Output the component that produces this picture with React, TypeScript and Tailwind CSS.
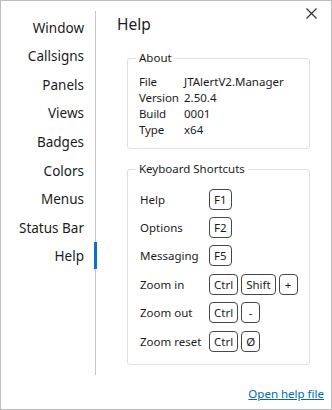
const navItems = ["Window", "Callsigns", "Panels", "Views", "Badges", "Colors", "Menus", "Status Bar", "Help"];

const about = [
  ["File", "JTAlertV2.Manager"],
  ["Version", "2.50.4"],
  ["Build", "0001"],
  ["Type", "x64"],
];

const shortcuts: [string, string[]][] = [
  ["Help", ["F1"]],
  ["Options", ["F2"]],
  ["Messaging", ["F5"]],
  ["Zoom in", ["Ctrl", "Shift", "+"]],
  ["Zoom out", ["Ctrl", "-"]],
  ["Zoom reset", ["Ctrl", "Ø"]],
];

function Key({ label }: { label: string }) {
  return (
    <span className="h-[21px] min-w-[19px] px-[4px] flex items-center justify-center border border-[#474747] rounded-[4px] text-[11.5px] text-[#1a1a1a]">
      {label}
    </span>
  );
}

function Nav() {
  return (
    <nav className="mt-[10px] h-[364px] w-[95px] border-r border-[#c6c6c6] pt-[2.5px]">
      {navItems.map((item) => (
        <div
          key={item}
          className="relative h-[28.6px] flex items-center justify-end pr-[11px] text-[13.5px] text-[#1b1b1b]"
        >
          {item}
          {item === "Help" && (
            <span className="absolute right-[-2px] top-[0px] h-[27px] w-[3px] bg-[#0a6fd1]" />
          )}
        </div>
      ))}
    </nav>
  );
}

export default function App() {
  return (
    <div
      className="relative w-[332px] h-[410px] flex bg-white border border-[#bdbdbd] text-[#1b1b1b]"
      style={{ fontFamily: "'Noto Sans', 'Open Sans', sans-serif" }}
    >
      <Nav />
      <div className="flex-1 flex flex-col">
        <h1 className="mt-[12px] pl-[21px] text-[15.5px] leading-[23px] font-normal">Help</h1>

        <fieldset className="mt-[14px] ml-[31px] w-[183px] border border-[#d9e1e6] rounded-[3px] pl-[11px] pt-[8px] pb-[10px]">
          <legend className="ml-[-3px] px-[3px] text-[11.5px] leading-[16px]">About</legend>
          {about.map(([k, v]) => (
            <div key={k} className="flex text-[11.5px] leading-[16px]">
              <span className="w-[45px] tracking-[-0.1px]">{k}</span>
              <span>{v}</span>
            </div>
          ))}
        </fieldset>

        <fieldset className="mt-[12px] ml-[31px] w-[183px] border border-[#d9e1e6] rounded-[3px] pl-[12px] pt-[8px] pb-[8.5px]">
          <legend className="ml-[-4px] px-[3px] text-[11.5px] leading-[16px]">Keyboard Shortcuts</legend>
          {shortcuts.map(([label, keys]) => (
            <div key={label} className="h-[28.4px] flex items-center text-[11.5px]">
              <span className="w-[69px]">{label}</span>
              <div className="flex gap-[3px]">
                {keys.map((k) => (
                  <Key key={k} label={k} />
                ))}
              </div>
            </div>
          ))}
        </fieldset>

        <a
          href="#"
          className="mt-auto mb-[7px] mr-[7px] self-end text-[11.5px] leading-[16px] text-[#0067c0] underline"
        >
          Open help file
        </a>
      </div>

      <button className="absolute top-[7px] right-[14px] w-[11px] h-[11px] text-[#333]">
        <svg viewBox="0 0 11 11" width="11" height="11" fill="none" stroke="currentColor" strokeWidth="1.2">
          <path d="M0.5 0.5L10.5 10.5M10.5 0.5L0.5 10.5" />
        </svg>
      </button>
    </div>
  );
}
